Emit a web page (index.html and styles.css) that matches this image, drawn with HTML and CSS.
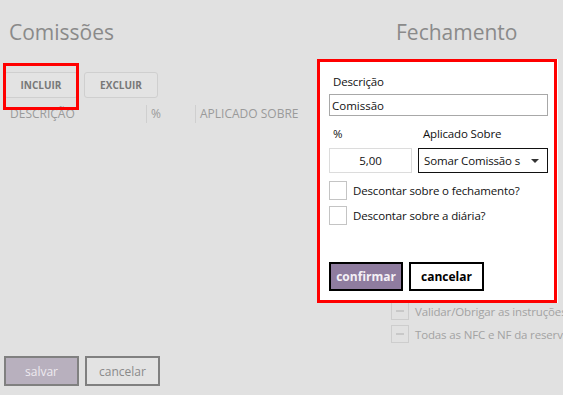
FILE: index.html
```html
<!DOCTYPE html>
<html lang="pt-BR">
<head>
    <meta charset="UTF-8">
    <meta name="viewport" content="width=device-width, initial-scale=1.0">
    <title>Comissões</title>
    <link rel="stylesheet" href="styles.css">
</head>
<body>

<div class="page">
    <section class="col-left">
        <h2>Comissões</h2>
        <div class="toolbar">
            <button class="tool-btn">INCLUIR</button>
            <button class="tool-btn">EXCLUIR</button>
        </div>
        <div class="grid-head">
            <span class="c-desc">DESCRIÇÃO</span>
            <span class="c-pct">%</span>
            <span class="c-apl">APLICADO SOBRE</span>
        </div>
        <div class="footer">
            <button class="btn-save">salvar</button>
            <button class="btn-cancel">cancelar</button>
        </div>
    </section>

    <section class="col-right">
        <h2>Fechamento</h2>
        <div class="opts">
            <div class="opt"><span class="mini-check"></span>Validar/Obrigar as instruções</div>
            <div class="opt"><span class="mini-check"></span>Todas as NFC e NF da reserva</div>
        </div>
    </section>

    <div class="highlight"></div>

    <div class="modal">
        <div class="modal-inner">
            <label class="lbl">Descrição</label>
            <input type="text" class="txt" value="Comissão">
            <div class="row">
                <div class="field-pct">
                    <label class="lbl">%</label>
                    <input type="text" class="num" value="5,00">
                </div>
                <div class="field-apl">
                    <label class="lbl">Aplicado Sobre</label>
                    <div class="select"><span class="sel-text">Somar Comissão s</span><span class="arrow"></span></div>
                </div>
            </div>
            <div class="check-row"><span class="check"></span>Descontar sobre o fechamento?</div>
            <div class="check-row"><span class="check"></span>Descontar sobre a diária?</div>
            <div class="actions">
                <button class="btn-confirm">confirmar</button>
                <button class="btn-modal-cancel">cancelar</button>
            </div>
        </div>
    </div>
</div>

</body>
</html>
```

FILE: styles.css
```css
html, body {
    margin: 0;
    height: 100%;
    background: #e1e1e1;
    overflow: hidden;
}
body {
    font-family: "Open Sans", Arial, sans-serif;
}
button { font-family: inherit; cursor: pointer; }

.page {
    position: relative;
    display: flex;
    height: 395px;
}
h2 {
    margin: 0;
    font-weight: 400;
    font-size: 21px;
    color: #8a8a8a;
    line-height: 28px;
}

/* left column */
.col-left {
    flex: none;
    width: 391px;
    display: flex;
    flex-direction: column;
    padding-top: 18px;
}
.col-left h2 { padding-left: 9px; }
.toolbar {
    display: flex;
    gap: 6px;
    margin-top: 26px;
    padding-left: 4px;
}
.tool-btn {
    width: 74px;
    height: 26px;
    background: #e3e3e3;
    border: 1px solid #cfcfcf;
    border-radius: 3px;
    font-size: 10px;
    font-weight: 700;
    color: #787878;
    padding: 0;
}
.grid-head {
    display: flex;
    margin-top: 7px;
    font-size: 12px;
    color: #9a9a9a;
    line-height: 18px;
}
.c-desc { width: 136px; padding-left: 10px; }
.c-pct { width: 44px; border-left: 1px solid #cfcfcf; padding-left: 4px; }
.c-apl { border-left: 1px solid #cfcfcf; padding-left: 4px; }

.footer {
    margin-top: auto;
    margin-bottom: 9px;
    display: flex;
    gap: 6px;
    padding-left: 4px;
}
.btn-save, .btn-cancel {
    width: 75px;
    height: 30px;
    border: 2px solid #808080;
    font-size: 12px;
    padding: 0;
}
.btn-save { background: #b8b0be; color: #eeeaf0; }
.btn-cancel { background: #e3e3e3; color: #8a8a8a; }

/* right column */
.col-right {
    flex: 1;
    min-width: 0;
    overflow: hidden;
    padding-top: 18px;
}
.col-right h2 { padding-left: 5px; }
.opts {
    margin-top: 256px;
    display: flex;
    flex-direction: column;
    gap: 5px;
}
.opt {
    display: flex;
    align-items: center;
    gap: 6px;
    font-size: 11.5px;
    letter-spacing: -0.15px;
    color: #a3a3a3;
    white-space: nowrap;
    height: 18px;
}
.mini-check {
    box-sizing: border-box;
    width: 18px;
    height: 18px;
    border: 1px solid #cdcdcd;
    position: relative;
    flex: none;
}
.mini-check::after {
    content: "";
    position: absolute;
    left: 4px;
    top: 7px;
    width: 8px;
    height: 2px;
    background: #c8c8c8;
}

/* overlays */
.highlight {
    position: absolute;
    left: 3px;
    top: 63px;
    width: 70px;
    height: 41px;
    border: 3px solid #f00;
}
.modal {
    position: absolute;
    left: 317px;
    top: 59px;
    width: 241px;
    height: 244px;
    background: #fff;
}
.modal-inner {
    box-sizing: border-box;
    width: 240px;
    height: 244px;
    border: 3px solid #f00;
    padding: 10px 8px 0 9px;
    font-size: 11.5px;
    letter-spacing: -0.15px;
    color: #111;
}
.lbl {
    display: block;
    padding-left: 4px;
    line-height: 20px;
}
.txt {
    display: block;
    box-sizing: border-box;
    width: 219px;
    height: 22px;
    margin-top: 2px;
    border: 1px solid #a8a8a8;
    padding: 0 2px;
    font: inherit;
    color: #111;
}
.row {
    display: flex;
    gap: 6px;
    margin-top: 8px;
}
.field-pct { width: 83px; }
.field-apl .lbl { padding-left: 5px; }
.num {
    display: block;
    box-sizing: border-box;
    width: 83px;
    height: 25px;
    margin-top: 4px;
    border: 1px solid #dcdcdc;
    text-align: center;
    font: inherit;
    color: #111;
}
.select {
    box-sizing: border-box;
    width: 130px;
    height: 25px;
    margin-top: 4px;
    border: 1px solid #111;
    display: flex;
    align-items: center;
    justify-content: space-between;
    padding: 0 8px 0 5px;
    white-space: nowrap;
}
.arrow {
    width: 0;
    height: 0;
    border-left: 4px solid transparent;
    border-right: 4px solid transparent;
    border-top: 4px solid #333;
}
.check-row {
    display: flex;
    align-items: center;
    gap: 6px;
    margin-top: 8px;
    height: 19px;
    white-space: nowrap;
}
.check-row + .check-row { margin-top: 6px; }
.check {
    box-sizing: border-box;
    width: 18px;
    height: 19px;
    border: 1px solid #c4c4c4;
    flex: none;
}
.actions {
    display: flex;
    gap: 6px;
    margin-top: 37px;
}
.btn-confirm, .btn-modal-cancel {
    height: 29px;
    border: 2px solid #000;
    font-size: 12px;
    font-weight: 700;
    padding: 0;
}
.btn-confirm { width: 74px; background: #8f7c9f; color: #f4f0f6; }
.btn-modal-cancel { width: 75px; background: #fff; color: #000; }
```
